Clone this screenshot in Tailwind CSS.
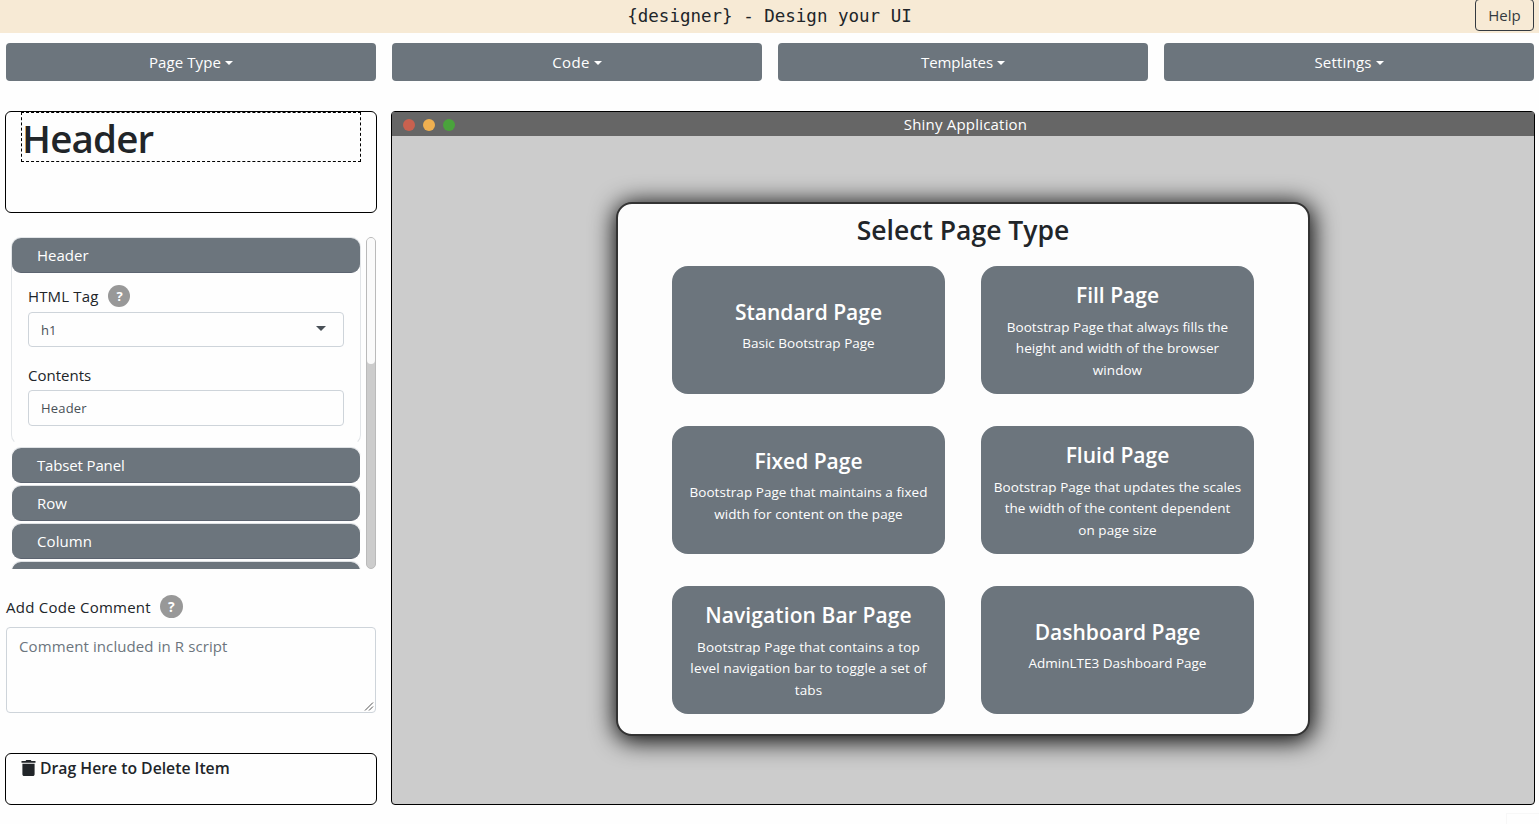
<!DOCTYPE html>
<html lang="en">
<head>
<meta charset="utf-8">
<title>{designer} - Design your UI</title>
<script src="https://cdn.jsdelivr.net/npm/@tailwindcss/browser@4"></script>
</head>
<body class="relative h-[824px] w-[1539px] overflow-hidden bg-[#fefefe] font-['Open_Sans','Noto_Sans',sans-serif] text-[15px] leading-6 text-[#212529]">
<header class="grid h-[33px] grid-cols-[1fr_auto_1fr] bg-[#f7ead5]">
  <span></span>
  <h1 class="font-['DejaVu_Sans_Mono',monospace] text-[17.5px] leading-[33px]">{designer} - Design your UI</h1>
  <button class="-mt-px mr-[5px] flex h-8 w-[59px] items-center justify-center justify-self-end rounded border border-[#343a40] text-[#343a40]">Help</button>
</header>

<nav class="mt-2.5 grid grid-cols-4 gap-4 pr-[5px] pl-1.5 text-white">
  <button class="flex h-[38px] items-center justify-center gap-1 rounded bg-[#6c757d]"><span class="tracking-[0.1px]">Page Type</span><i class="mt-px border-x-[4.5px] border-t-[4.5px] border-x-transparent border-t-white"></i></button>
  <button class="flex h-[38px] items-center justify-center gap-1 rounded bg-[#6c757d]"><span class="tracking-[0.3px]">Code</span><i class="mt-px border-x-[4.5px] border-t-[4.5px] border-x-transparent border-t-white"></i></button>
  <button class="flex h-[38px] items-center justify-center gap-1 rounded bg-[#6c757d]"><span class="tracking-[-0.1px]">Templates</span><i class="mt-px border-x-[4.5px] border-t-[4.5px] border-x-transparent border-t-white"></i></button>
  <button class="flex h-[38px] items-center justify-center gap-1 rounded bg-[#6c757d]"><span class="tracking-[0.2px]">Settings</span><i class="mt-px border-x-[4.5px] border-t-[4.5px] border-x-transparent border-t-white"></i></button>
</nav>

<main class="mt-[30px] flex gap-3.5 pr-1 pl-[5px]">
  <aside class="flex h-[694px] w-[372px] flex-col">
    <div class="h-[102px] rounded-md border border-black px-[15px]">
      <div class="h-[50px] border border-dashed border-black text-[38.5px] leading-[50px] font-semibold tracking-[-0.8px]">Header</div>
    </div>

    <div class="mt-6 flex h-[332px] justify-between overflow-hidden pr-px pl-1.5">
      <div class="flex w-[350px] flex-col text-white">
        <div class="h-[208px] shrink-0 rounded-[10px] border border-b-transparent border-[#e2e5e8]">
          <div class="h-[35px] rounded-[9px] border-b border-[#5c6470] bg-[#6c757d] pl-[25px] leading-[35px]">Header</div>
          <div class="px-4 pt-3 text-[#212529]">
            <div class="flex h-[22px] items-center gap-2.5"><span class="tracking-[0.15px]">HTML Tag</span><span class="flex size-[22px] items-center justify-center rounded-full bg-[#989898] text-[13px] font-bold text-white">?</span></div>
            <div class="mt-[5px] flex h-[35px] items-center justify-between rounded border border-[#ced4da] pr-[17px] pl-3 text-[13px] text-[#495057]"><span>h1</span><i class="mb-0.5 border-x-[5px] border-t-[5px] border-x-transparent border-t-[#495057]"></i></div>
            <div class="mt-4 h-[27px] leading-6">Contents</div>
            <div class="flex h-9 items-center rounded border border-[#ced4da] pl-3 text-[13px] tracking-[0.2px] text-[#495057]">Header</div>
          </div>
        </div>
        <div class="mt-0.5 flex flex-col gap-0.5">
          <div class="h-9 rounded-[10px] border-t border-[#dfe2e5]"><div class="mx-px h-[35px] rounded-[9px] border-b border-[#5c6470] bg-[#6c757d] pl-[25px] leading-[35px] tracking-[-0.15px]">Tabset Panel</div></div>
          <div class="h-9 rounded-[10px] border-t border-[#dfe2e5]"><div class="mx-px h-[35px] rounded-[9px] border-b border-[#5c6470] bg-[#6c757d] pl-[25px] leading-[35px]">Row</div></div>
          <div class="h-9 rounded-[10px] border-t border-[#dfe2e5]"><div class="mx-px h-[35px] rounded-[9px] border-b border-[#5c6470] bg-[#6c757d] pl-[25px] leading-[35px] tracking-[0.1px]">Column</div></div>
          <div class="h-9 rounded-[10px] border-t border-[#dfe2e5]"><div class="mx-px h-[35px] rounded-[9px] bg-[#6c757d]"></div></div>
        </div>
      </div>
      <div class="h-[332px] w-2.5 rounded-full border border-[#bababa] bg-[#cccccc]">
        <div class="h-[126px] rounded-full bg-[#fafafa]"></div>
      </div>
    </div>

    <div class="mt-[26px] flex h-[23px] items-center gap-[9px] pl-px"><span class="tracking-[0.25px]">Add Code Comment</span><span class="flex size-[23px] items-center justify-center rounded-full bg-[#989898] text-[14px] font-bold text-white">?</span></div>
    <div class="mx-px mt-[9px] flex h-[86px] justify-between rounded border border-[#ced4da] pl-3 text-[#6c757d]">
      <span class="pt-1.5 tracking-[0.1px]">Comment included in R script</span>
      <svg class="mr-px mb-px size-2.5 self-end" viewBox="0 0 10 10" fill="none" stroke="#555" stroke-width="1"><path d="M1 9.500 9 1.500M5 9.500 9 5.500"/></svg>
    </div>

    <div class="mt-10 h-[52px] rounded-md border border-black pl-[15px]">
      <div class="flex h-7 items-center gap-1 font-semibold"><svg class="h-4 w-[15px]" viewBox="0 0 15 16" fill="#212529"><path d="M.5 1h4L5.300 0h4.400l.8 1h4v1.800H.5zM1.400 3.700h12.200V14.200c0 1-.7 1.800-1.800 1.800H3.200c-1.100 0-1.800-.8-1.800-1.800z"/></svg><span class="text-[15.75px] leading-[27px]">Drag Here to Delete Item</span></div>
    </div>
  </aside>

  <section class="flex h-[694px] w-[1144px] flex-col rounded-sm border border-black bg-[#cccccc]">
    <div class="grid h-6 shrink-0 grid-cols-[1fr_auto_1fr] items-center bg-[#666666] text-white">
      <div class="flex gap-2 pt-0.5 pl-[11px]"><i class="size-3 rounded-full bg-[#c9614f]"></i><i class="size-3 rounded-full bg-[#f0b050]"></i><i class="size-3 rounded-full bg-[#4aa33c]"></i></div>
      <span class="pl-[5px] tracking-[0.2px]">Shiny Application</span>
      <span></span>
    </div>
    <div class="mt-[66px] ml-[224px] h-[534px] w-[694px] rounded-[16px] border-2 border-[#333] bg-[#fdfdfd] shadow-[1px_3px_24px_2px_#000]">
      <h2 class="pt-2 text-center text-[26.5px] leading-9 font-semibold">Select Page Type</h2>
      <div class="mt-[18px] ml-[54px] grid grid-cols-[273px_273px] grid-rows-[128px_128px_128px] gap-x-9 gap-y-8 text-center text-[13.5px] leading-[21.5px] text-white">
        <div class="rounded-2xl bg-[#6c757d] pt-8"><h3 class="mb-[7px] text-[21px] leading-7 font-semibold">Standard Page</h3><p>Basic Bootstrap Page</p></div>
        <div class="rounded-2xl bg-[#6c757d] pt-[15px]"><h3 class="mb-[7.5px] text-[21px] leading-7 font-semibold">Fill Page</h3><p class="tracking-[0.05px]">Bootstrap Page that always fills the<br>height and width of the browser<br>window</p></div>
        <div class="rounded-2xl bg-[#6c757d] pt-[21px]"><h3 class="mb-[7px] text-[21px] leading-7 font-semibold">Fixed Page</h3><p class="tracking-[0.05px]">Bootstrap Page that maintains a fixed<br>width for content on the page</p></div>
        <div class="rounded-2xl bg-[#6c757d] pt-[15px]"><h3 class="mb-[7.5px] text-[21px] leading-7 font-semibold">Fluid Page</h3><p class="tracking-[0.05px]">Bootstrap Page that updates the scales<br>the width of the content dependent<br>on page size</p></div>
        <div class="rounded-2xl bg-[#6c757d] pt-[15px]"><h3 class="mb-[7.5px] text-[21px] leading-7 font-semibold tracking-[0.1px]">Navigation Bar Page</h3><p class="tracking-[0.15px]">Bootstrap Page that contains a top<br>level navigation bar to toggle a set of<br>tabs</p></div>
        <div class="rounded-2xl bg-[#6c757d] pt-8"><h3 class="mb-[7px] text-[21px] leading-7 font-semibold">Dashboard Page</h3><p>AdminLTE3 Dashboard Page</p></div>
      </div>
    </div>
  </section>
</main>
<div class="absolute right-0 bottom-0 h-[11px] w-[33px] border-t border-l border-[#f7f7f7]"></div>
</body>
</html>
